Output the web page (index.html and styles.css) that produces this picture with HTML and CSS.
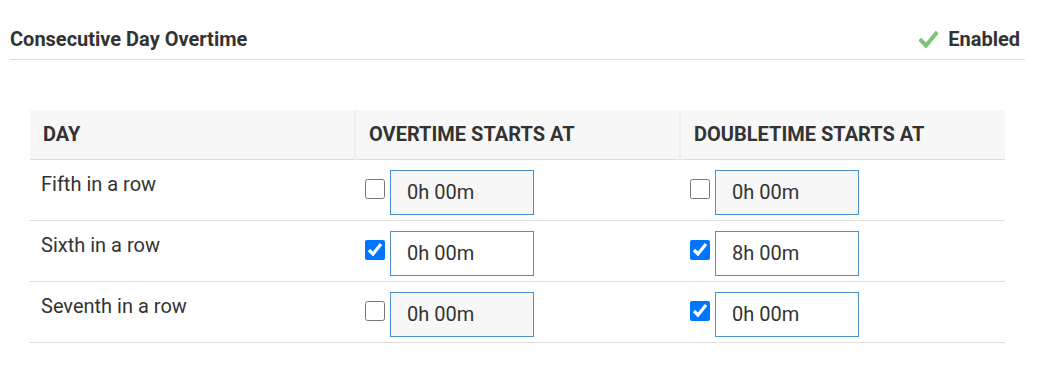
FILE: index.html
```html
<!DOCTYPE html>
<html lang="en">
<head>
  <meta charset="UTF-8" />
  <meta name="viewport" content="width=device-width, initial-scale=1.0" />
  <title>Consecutive Day Overtime</title>
  <link rel="stylesheet" href="styles.css">
</head>
<body>
  <div class="panel">
    <div class="panel-head">
      <h2>Consecutive Day Overtime</h2>
      <div class="status">
        <svg class="check" width="19" height="17" viewBox="0 0 19 17">
          <path d="M2 9.5 L7 14.5 L17 2.5" fill="none" stroke="#7cc576" stroke-width="4" stroke-linecap="square" />
        </svg>
        <span>Enabled</span>
      </div>
    </div>

    <table class="rules">
      <thead>
        <tr>
          <th>Day</th>
          <th>Overtime Starts At</th>
          <th>Doubletime Starts At</th>
        </tr>
      </thead>
      <tbody>
        <tr>
          <td>Fifth in a row</td>
          <td>
            <div class="field">
              <input type="checkbox" />
              <input type="text" class="time" value="0h 00m" disabled />
            </div>
          </td>
          <td>
            <div class="field">
              <input type="checkbox" />
              <input type="text" class="time" value="0h 00m" disabled />
            </div>
          </td>
        </tr>
        <tr>
          <td>Sixth in a row</td>
          <td>
            <div class="field">
              <input type="checkbox" checked />
              <input type="text" class="time" value="0h 00m" />
            </div>
          </td>
          <td>
            <div class="field">
              <input type="checkbox" checked />
              <input type="text" class="time" value="8h 00m" />
            </div>
          </td>
        </tr>
        <tr>
          <td>Seventh in a row</td>
          <td>
            <div class="field">
              <input type="checkbox" />
              <input type="text" class="time" value="0h 00m" disabled />
            </div>
          </td>
          <td>
            <div class="field">
              <input type="checkbox" checked />
              <input type="text" class="time" value="0h 00m" />
            </div>
          </td>
        </tr>
      </tbody>
    </table>
  </div>
</body>
</html>
```

FILE: styles.css
```css
* {
  box-sizing: border-box;
}

body {
  margin: 0;
  font-family: Roboto, 'Liberation Sans', sans-serif;
  color: #333;
  background-color: #fff;
}

.panel {
  padding: 0 13px 0 10px;
}

.panel-head {
  display: flex;
  justify-content: space-between;
  align-items: center;
  height: 60px;
  padding-top: 19px;
  border-bottom: 1px solid #ddd;
}

.panel-head h2 {
  margin: 0;
  font-size: 20px;
  font-weight: bold;
}

.status {
  display: flex;
  align-items: center;
  gap: 10px;
  padding-right: 5px;
  font-size: 20px;
  font-weight: bold;
}

.rules {
  width: calc(100% - 40px);
  margin: 50px 20px 0;
  border-collapse: collapse;
  table-layout: fixed;
}

.rules th {
  height: 49px;
  padding: 0 13px;
  text-align: left;
  font-size: 20px;
  font-weight: bold;
  text-transform: uppercase;
  background-color: #f7f7f7;
  border-left: 2px solid #eee;
  border-bottom: 1px solid #ddd;
}

.rules th:first-child {
  border-left: none;
}

.rules td {
  padding: 10px 10px 5px;
  vertical-align: top;
  font-size: 20px;
  border-bottom: 1px solid #ddd;
}

.rules td:first-child {
  padding-top: 12px;
  padding-left: 11px;
}

.field {
  display: flex;
  align-items: center;
}

.field input[type="checkbox"] {
  width: 20px;
  height: 20px;
  margin: 0 5px 6px 0;
}

.time {
  width: 144px;
  height: 45px;
  padding: 0 16px;
  font-family: Roboto, 'Liberation Sans', sans-serif;
  font-size: 20px;
  color: #333;
  background-color: #fff;
  border: 1px solid #4b8fcc;
  border-radius: 0;
}

.time:disabled {
  background-color: #f7f7f7;
  color: #333;
}
```
